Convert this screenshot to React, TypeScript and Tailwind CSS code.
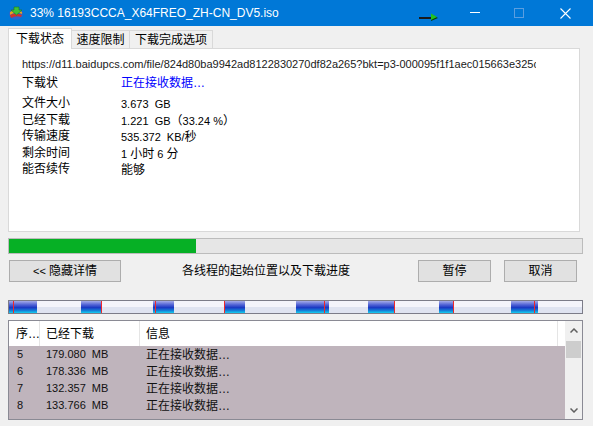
import React from 'react';

const FONT = { fontFamily: '"Liberation Sans", "Noto Sans CJK SC", sans-serif' };

// splits a string into CJK / latin runs so latin text sits at 11px like Tahoma
function Mixed({ text }: { text: string }) {
  const parts = text.split(/([\u3000-\u9fff\uff00-\uffef…]+)/).filter(Boolean);
  return (
    <>
      {parts.map((p, i) =>
        /[\u3000-\u9fff\uff00-\uffef…]/.test(p) ? (
          <span key={i} className="whitespace-pre text-[12px]">{p}</span>
        ) : (
          <span key={i} className="whitespace-pre text-[11px]">{p}</span>
        ),
      )}
    </>
  );
}

const info = [
  ['文件大小', '3.673  GB'],
  ['已经下载', '1.221  GB（33.24 %）'],
  ['传输速度', '535.372  KB/秒'],
  ['剩余时间', '1 小时 6 分'],
  ['能否续传', '能够'],
];

// thread segments: [blue start, blue end, red marker], px from bar left
const segments = [
  [0, 28, 4],
  [72, 92, 92],
  [144, 165, 146],
  [215, 236, 215],
  [287, 320, 315],
  [359, 385, 385],
  [430, 444, 444],
  [502, 529, 525],
];

const rows = [
  ['5', '179.080  MB'],
  ['6', '178.336  MB'],
  ['7', '132.357  MB'],
  ['8', '133.766  MB'],
];

function AppIcon() {
  return (
    <svg width="17" height="16" viewBox="0 0 17 16">
      <ellipse cx="8" cy="9" rx="7" ry="5.5" fill="#2f63c9" />
      <path d="M2 7 Q8 3 14 7 L14 9 Q8 6 2 10 Z" fill="#e8a21f" />
      <path d="M2 10 Q8 7 14 10 L13 12 Q8 10 3 13 Z" fill="#d2332a" />
      <path d="M6 2 L11 2 L11 5 L14 5 L8.5 10 L3 5 L6 5 Z" fill="#3ec13a" stroke="#1d7a1d" strokeWidth="0.6" />
    </svg>
  );
}

function Button({ label, w }: { label: string; w: string }) {
  return (
    <button
      type="button"
      className={`${w} flex h-[22px] items-center justify-center border border-[#adadad] bg-[#e1e1e1] text-black`}
    >
      <Mixed text={label} />
    </button>
  );
}

export default function App() {
  return (
    <div style={FONT} className="h-[426px] w-[593px] overflow-hidden bg-[#f0f0f0] text-black">
      {/* title bar */}
      <div className="relative flex h-[26px] items-center bg-[#0078d7] pl-[8px] text-white">
        <AppIcon />
        <span className="ml-[5px] text-[12px]">33% 16193CCCA_X64FREO_ZH-CN_DV5.iso</span>
        <svg className="absolute left-[418px] top-[13px]" width="21" height="9" viewBox="0 0 21 9">
          <rect x="1" y="4" width="13" height="2" fill="#1a1a1a" />
          <path d="M13 1 L20 5 L13 8 Z" fill="#0a3a0a" />
          <path d="M13 0.5 L19 4 L13 7 Z" fill="#22c21f" />
        </svg>
        <div className="absolute left-[470px] top-[12px] h-px w-[10px] bg-white" />
        <div className="absolute left-[514px] top-[8px] h-[10px] w-[10px] border border-[#5a9ee0]" />
        <svg className="absolute left-[560px] top-[8px]" width="11" height="11" viewBox="0 0 11 11">
          <path d="M0.5 0.5 L10.5 10.5 M10.5 0.5 L0.5 10.5" stroke="white" strokeWidth="1.1" />
        </svg>
      </div>

      <div className="pl-[8px] pr-[10px]">
        {/* tabs */}
        <div className="mt-[2px] flex h-[20px] items-end">
          <div className="relative z-10 mb-[-1px] flex h-[21px] w-[64px] items-center justify-center border border-b-0 border-[#d9d9d9] bg-white pb-[1px]">
            <span className="text-[12px]">下载状态</span>
          </div>
          <div className="flex h-[18px] w-[58px] items-center justify-center border border-l-0 border-b-0 border-[#d9d9d9] bg-[#f0f0f0]">
            <span className="text-[12px]">速度限制</span>
          </div>
          <div className="flex h-[18px] w-[83px] items-center justify-center border border-l-0 border-b-0 border-[#d9d9d9] bg-[#f0f0f0]">
            <span className="text-[12px]">下载完成选项</span>
          </div>
        </div>

        {/* tab panel */}
        <div className="h-[184px] w-[572px] border border-[#d9d9d9] bg-white pl-[13px] pt-[7px]">
          <div className="h-[16px] w-[514px] overflow-hidden whitespace-nowrap text-[11px] leading-[16px] text-[#1a1a1a]">
            https://d11.baidupcs.com/file/824d80ba9942ad8122830270df82a265?bkt=p3-000095f1f1aec015663e325c8a
          </div>
          <div className="mt-[3px] flex h-[16px] items-center">
            <span className="w-[99px] text-[12px]">下载状</span>
            <span className="text-[12px] text-[#0000ff]">正在接收数据…</span>
          </div>
          <div className="mt-[4px] flex flex-col">
            {info.map(([k, v]) => (
              <div key={k} className="flex h-[16.5px] items-center">
                <span className="w-[99px] text-[12px]">{k}</span>
                <span className="whitespace-pre">
                  <Mixed text={v} />
                </span>
              </div>
            ))}
          </div>
        </div>

        {/* overall progress */}
        <div className="mt-[6px] h-[16px] w-[575px] border border-[#bcbcbc] bg-[#e6e6e6]">
          <div className="h-full w-[187px] bg-[#06b025]" />
        </div>

        {/* buttons */}
        <div className="mt-[6px] flex h-[22px] items-center">
          <Button label="<< 隐藏详情" w="w-[112px] ml-px" />
          <span className="ml-[61px] w-[236px] text-[12px]">各线程的起始位置以及下载进度</span>
          <Button label="暂停" w="w-[73px]" />
          <Button label="取消" w="w-[73px] ml-[13px]" />
        </div>

        {/* thread segments */}
        <div className="relative mt-[18px] h-[14px] w-[575px] overflow-hidden border border-[#7c7c88] bg-[linear-gradient(to_bottom,#f4f4fa_50%,#dfe3f0_50%)]">
          {segments.map(([a, b, r], i) => (
            <React.Fragment key={i}>
              <div
                className="absolute inset-y-0 bg-[linear-gradient(to_bottom,#a6ace8_0%,#5566d6_30%,#1b38c2_55%,#157ad6_78%,#12d0f0_100%)]"
                style={{ left: a, width: b - a }}
              />
              <div className="absolute inset-y-0 w-px bg-[#f0282a]" style={{ left: r }} />
            </React.Fragment>
          ))}
        </div>

        {/* thread list */}
        <div className="mt-[6px] flex h-[100px] w-[575px] border border-[#8a8a94] bg-white">
          <div className="flex flex-1 flex-col">
            <div className="flex h-[25px] shrink-0 items-center bg-white">
              <div className="flex h-full w-[31px] items-center border-r border-[#e5e5e5] pl-[7px] text-[12px]">
                序…
              </div>
              <div className="flex h-full w-[100px] items-center border-r border-[#e5e5e5] pl-[6px] text-[12px]">
                已经下载
              </div>
              <div className="flex h-full w-[418px] items-center border-r border-[#e5e5e5] pl-[6px] text-[12px]">
                信息
              </div>
            </div>
            <div className="flex-1 bg-[#bfb4bc]">
              {rows.map(([n, size]) => (
                <div key={n} className="flex h-[17px] items-center text-[#111]">
                  <span className="w-[37px] pl-[8px] text-[11px]">{n}</span>
                  <span className="w-[100px] whitespace-pre text-[11px]">{size}</span>
                  <span className="text-[12px]">正在接收数据…</span>
                </div>
              ))}
            </div>
          </div>
          {/* scrollbar */}
          <div className="flex w-[17px] flex-col items-center bg-[#f0f0f0]">
            <svg className="mt-[7px]" width="8" height="5" viewBox="0 0 8 5">
              <path d="M0.5 4.5 L4 1 L7.5 4.5" fill="none" stroke="#606060" strokeWidth="1.5" />
            </svg>
            <div className="mt-[8px] h-[17px] w-[15px] bg-[#cdcdcd]" />
            <div className="flex-1" />
            <svg className="mb-[6px]" width="8" height="5" viewBox="0 0 8 5">
              <path d="M0.5 0.5 L4 4 L7.5 0.5" fill="none" stroke="#606060" strokeWidth="1.5" />
            </svg>
          </div>
        </div>
      </div>
    </div>
  );
}
